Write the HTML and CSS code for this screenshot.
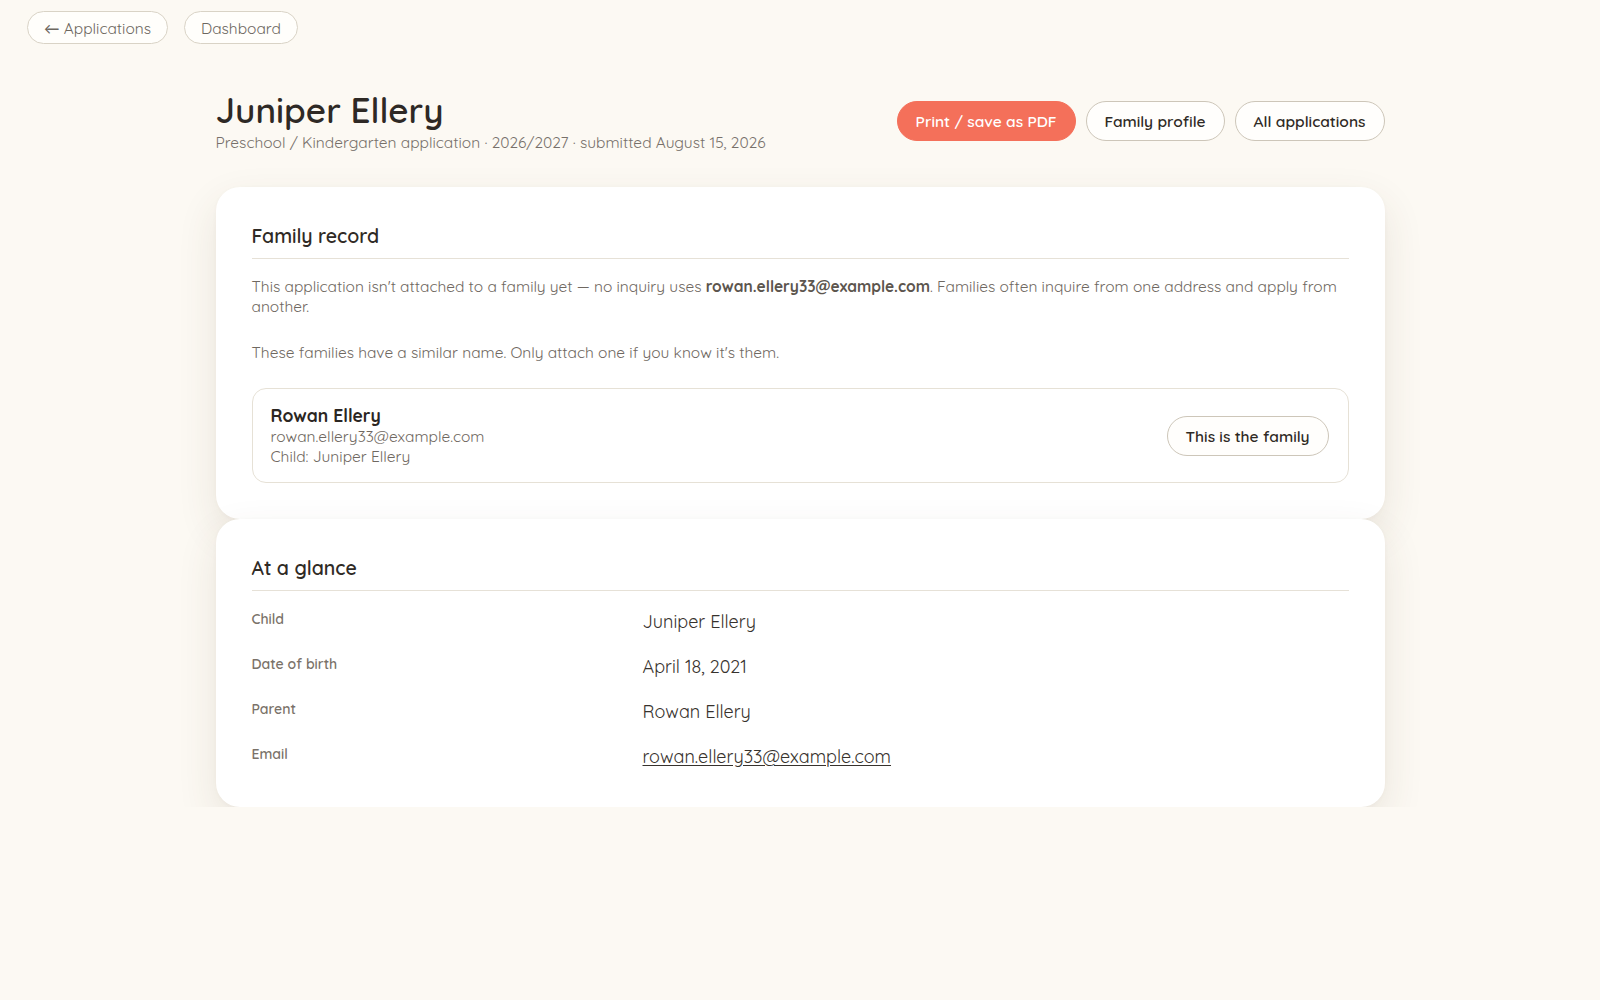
FILE: index.html
```html
<!DOCTYPE html>
<html lang="en">
<head>
<meta charset="utf-8">
<title>Juniper Ellery — Application</title>
<link rel="stylesheet" href="styles.css">
</head>
<body>
  <nav class="topnav">
    <a class="pill" href="#">&larr; Applications</a>
    <a class="pill" href="#">Dashboard</a>
  </nav>

  <main class="page">
    <header class="page-head">
      <div class="page-title">
        <h1>Juniper Ellery</h1>
        <p class="meta">Preschool / Kindergarten application · 2026/2027 · submitted August 15, 2026</p>
      </div>
      <div class="actions">
        <a class="btn btn-primary" href="#">Print / save as PDF</a>
        <a class="btn" href="#">Family profile</a>
        <a class="btn" href="#">All applications</a>
      </div>
    </header>

    <section class="card">
      <h2 class="card-title">Family record</h2>
      <p class="text first">This application isn't attached to a family yet — no inquiry uses <strong>rowan.ellery33@example.com</strong>. Families often inquire from one address and apply from another.</p>
      <p class="text">These families have a similar name. Only attach one if you know it's them.</p>
      <div class="match">
        <div class="match-info">
          <div class="match-name">Rowan Ellery</div>
          <div class="match-line">rowan.ellery33@example.com</div>
          <div class="match-line">Child: Juniper Ellery</div>
        </div>
        <button class="btn" type="button">This is the family</button>
      </div>
    </section>

    <section class="card">
      <h2 class="card-title">At a glance</h2>
      <dl class="glance">
        <dt>Child</dt><dd>Juniper Ellery</dd>
        <dt>Date of birth</dt><dd>April 18, 2021</dd>
        <dt>Parent</dt><dd>Rowan Ellery</dd>
        <dt>Email</dt><dd><a href="#">rowan.ellery33@example.com</a></dd>
      </dl>
    </section>
  </main>
</body>
</html>
```

FILE: styles.css
```css
* { box-sizing: border-box; }

body {
  margin: 0;
  background: #fcf9f3;
  color: #2f2a25;
  font-family: "Quicksand", "Lato", "Noto Sans", sans-serif;
}

a { color: inherit; text-decoration: none; }

/* top navigation pills */
.topnav {
  display: flex;
  gap: 16px;
  padding: 11px 27px 0;
}

.pill {
  display: inline-flex;
  align-items: center;
  height: 33px;
  padding: 0 16px;
  border: 1px solid #d9d3c6;
  border-radius: 999px;
  background: #fffefb;
  color: #6d675f;
  font-size: 15.5px;
}

/* page */
.page {
  max-width: 1169px;
  margin: 45px auto 0;
}

.page-head {
  display: flex;
  justify-content: space-between;
  align-items: center;
  margin-bottom: 35px;
}

h1 {
  margin: 0;
  font-size: 35px;
  line-height: 43px;
  font-weight: 600;
  color: #2e2925;
}

.meta {
  margin: 0;
  font-size: 15.5px;
  line-height: 20px;
  color: #77706a;
}

.actions {
  display: flex;
  gap: 10px;
}

.btn {
  display: inline-flex;
  align-items: center;
  justify-content: center;
  height: 40px;
  padding: 0 18px;
  border: 1px solid #cdc6b9;
  border-radius: 999px;
  background: #fffefc;
  color: #2f2a25;
  font-family: inherit;
  font-size: 15.5px;
  font-weight: 600;
  cursor: pointer;
}

.btn-primary {
  background: #f4705a;
  border-color: #f4705a;
  color: #fff;
}

/* cards */
.card {
  background: #fff;
  border-radius: 24px;
  padding: 37px 36px 36px;
  box-shadow: 0 16px 40px rgba(80, 65, 40, 0.11), 0 1px 4px rgba(80, 65, 40, 0.03);
}

.card + .card {
  padding-bottom: 37px;
}

.card-title {
  margin: 0;
  padding-bottom: 10px;
  border-bottom: 1px solid #e6e1d7;
  font-size: 19.5px;
  line-height: 24px;
  font-weight: 600;
  color: #2f2a25;
}

.text {
  margin: 26px 0 0;
  font-size: 15.5px;
  line-height: 20px;
  color: #6f6861;
}

.text.first { margin-top: 17px; }

.text strong {
  color: #5c554e;
  font-weight: 700;
}

/* possible family match */
.match {
  display: flex;
  justify-content: space-between;
  align-items: center;
  margin-top: 26px;
  padding: 16px 19px 16px 18px;
  border: 1px solid #e6e1d6;
  border-radius: 14px;
}

.match-name {
  font-size: 17.5px;
  line-height: 21px;
  font-weight: 700;
  color: #2b2622;
}

.match-line {
  font-size: 15.5px;
  line-height: 20px;
  color: #6f6861;
}

/* at a glance list */
.glance {
  display: grid;
  grid-template-columns: 359px 1fr;
  column-gap: 32px;
  row-gap: 19px;
  margin: 18px 0 0;
}

.glance dt {
  font-size: 14px;
  line-height: 20px;
  font-weight: 600;
  color: #7a7269;
}

.glance dd {
  margin: 0;
  font-size: 18px;
  line-height: 26px;
  color: #37322d;
}

.glance dd a {
  text-decoration: underline;
  text-underline-offset: 2px;
}
```
